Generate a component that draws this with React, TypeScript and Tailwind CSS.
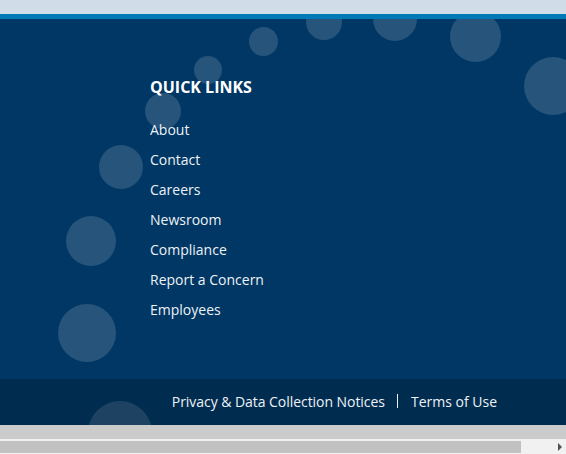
const links = ['About', 'Contact', 'Careers', 'Newsroom', 'Compliance', 'Report a Concern', 'Employees']

// decorative bubbles: center x, center y (relative to navy area), radius
const bubbles = [
  [263, 22, 14.5],
  [324, 3, 18],
  [395, 0, 22],
  [475, 17, 25.5],
  [553, 67, 29],
  [208, 51, 14],
  [163, 92, 18],
  [121, 148, 22],
  [91, 222, 25],
  [87, 314, 29],
  [120, 414, 32],
]

export default function App() {
  return (
    <div className="w-[566px] h-[454px] overflow-hidden flex flex-col font-['Open_Sans',sans-serif]">
      <div className="h-[14px] bg-[#d0dde9]" />
      <div className="h-[5px] bg-[#0079b6]" />

      <footer className="relative flex-1 flex flex-col bg-[#003764] overflow-hidden">
        {bubbles.map(([x, y, r], i) => (
          <div
            key={i}
            className="absolute rounded-full bg-white/15"
            style={{ left: x - r, top: y - r, width: r * 2, height: r * 2 }}
          />
        ))}

        <div className="relative flex-1 pl-[150px] pt-[56px]">
          <h3 className="text-[16px] leading-[24px] font-bold text-white">QUICK LINKS</h3>
          <ul className="mt-[16px] flex flex-col">
            {links.map((l) => (
              <li key={l} className="text-[14px] leading-[30px] text-[#eef2f6]">
                <a href="#">{l}</a>
              </li>
            ))}
          </ul>
        </div>

        <div className="relative h-[46px] bg-black/20 flex items-center justify-end pr-[69px] pb-[2px] text-[14px] text-[#eef2f6]">
          <a href="#" className="tracking-[-0.05px]">Privacy &amp; Data Collection Notices</a>
          <span className="ml-[12px] mr-[13px] w-px h-[14px] bg-[#eef2f6]" />
          <a href="#">Terms of Use</a>
        </div>
      </footer>

      <div className="h-[14px] bg-[#cbcbcb]" />
      <div className="h-[15px] bg-[#f1f1f1] flex items-center relative">
        <div className="w-[521px] h-[12px] bg-[#c1c1c1]" />
        <div className="absolute right-[4px] top-[4px] w-0 h-0 border-y-[4px] border-y-transparent border-l-[4px] border-l-[#505050]" />
      </div>
    </div>
  )
}
